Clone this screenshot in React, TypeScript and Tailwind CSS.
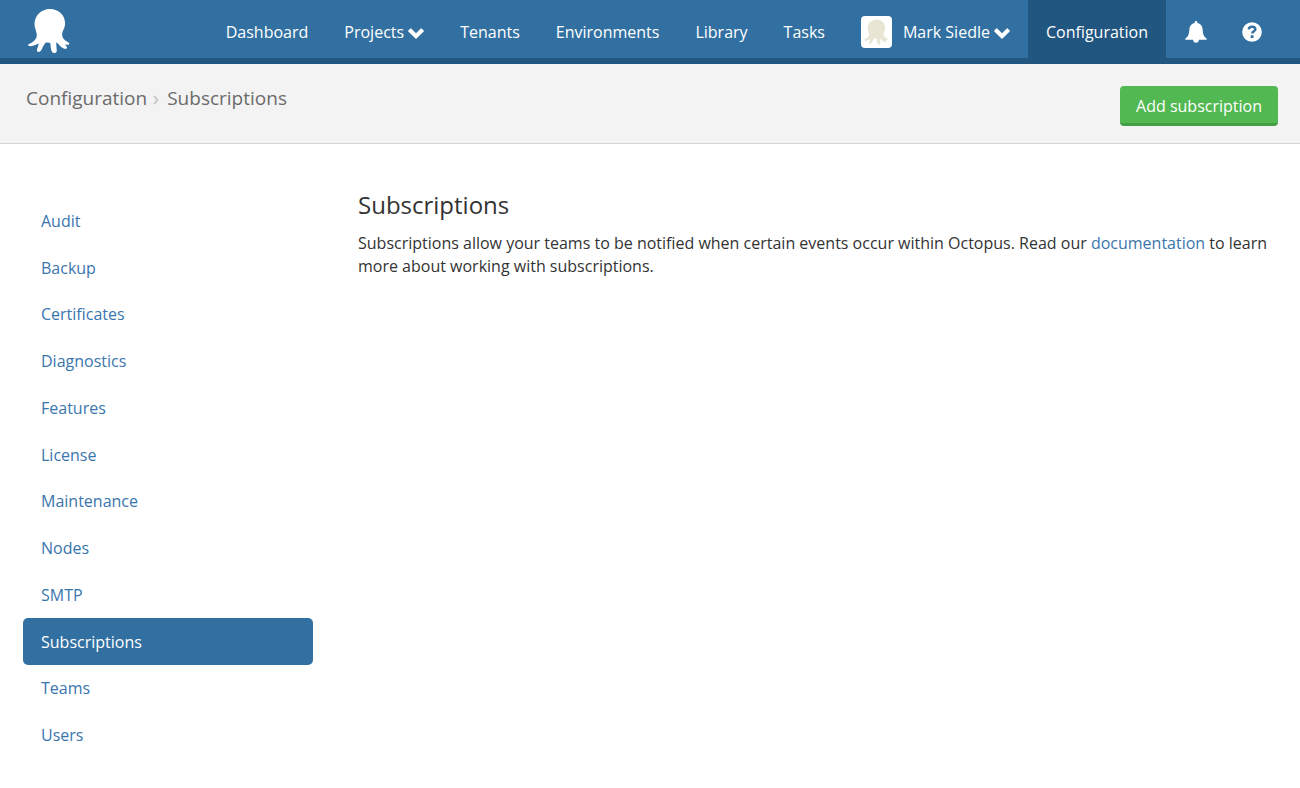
import React from 'react';

const navText = 'flex items-center px-[18px] pt-1.5 text-white';

const sections = [
  'Audit',
  'Backup',
  'Certificates',
  'Diagnostics',
  'Features',
  'License',
  'Maintenance',
  'Nodes',
  'SMTP',
  'Subscriptions',
  'Teams',
  'Users',
];

function Octopus({ className }: { className: string }) {
  return (
    <svg viewBox="0 0 42 44" className={className} fill="currentColor" aria-hidden="true">
      <path d="M22 0C13 0 6.500 6.700 6.500 15c0 4.200 2.300 7.500 2.300 11 0 3.600-2.300 6-5.300 7.700C1.500 34.800 0 35.300 0 36c0 1.200 2.800 1.500 5 .8 2-.6 3.600-1.200 5.500-2.300.2 1.600-.8 3.700-1.400 5.400-.5 1.600.2 3.100 1.600 3.100 1.900 0 2.800-2 3.800-4.200.8-1.800 2-4 3.500-5.200 1.700-.2 3 .1 4.300.3.400 2.500.4 8.700 2.900 9.900 1.700.8 3.500-.2 3.600-2 .1-2.500-.8-5.200-.5-8.200 1.500.5 2.500 2.300 4 3.600 1.700 1.500 4.200 3 6 2.600 1.100-.4.800-1.500.2-2.300l-1.700-2c1.700.5 4.100.6 4.500-.5.300-1-1-1.600-2-2.200-3-1.800-5.200-3.700-5.200-7.300 0-3.600 3-6.200 3-10.700C37.200 6.500 31 0 22 0Z" />
    </svg>
  );
}

function Chevron() {
  return (
    <svg viewBox="0 0 16 11" className="ml-1 mt-0.5 h-[11px] w-4" fill="currentColor" aria-hidden="true">
      <path d="M8 10.900.3 3.400a.6.6 0 0 1 0-.8L2.400.5a.6.6 0 0 1 .8 0L8 5.200 12.800.5a.6.6 0 0 1 .8 0l2.100 2.100a.6.6 0 0 1 0 .8Z" />
    </svg>
  );
}

function Bell() {
  return (
    <svg viewBox="0 0 22 22" className="h-[22px] w-[22px]" fill="currentColor" aria-hidden="true">
      <path d="M11 0c.9 0 1.400.6 1.400 1.500v.4c3.400.6 5 3.200 5.200 6.200.2 4.500.8 7.300 4 9.500.5.400.2 1.200-.4 1.200H14c-.2 1.700-1.400 3-3 3s-2.800-1.300-3-3H.8c-.6 0-.9-.8-.4-1.200 3.200-2.200 3.800-5 4-9.500.2-3 1.800-5.600 5.200-6.200v-.4C9.600.6 10.100 0 11 0Z" />
    </svg>
  );
}

function Help() {
  return (
    <svg viewBox="0 0 20 20" className="h-5 w-5" aria-hidden="true">
      <circle cx="10" cy="10" r="9.800" fill="#fff" />
      <path d="M6.800 7.300C7 5.400 8.300 4.700 10.100 4.700c1.900 0 3.200.9 3.200 2.500 0 1.900-2.900 2.100-3.100 4.300" fill="none" stroke="#3270a1" strokeWidth="2.500" />
      <path d="M8.700 13.200h2.800v2.800H8.700z" fill="#3270a1" />
    </svg>
  );
}

export default function App() {
  return (
    <div className="min-h-screen bg-white font-['Open_Sans','Noto_Sans',sans-serif] text-base text-[#333]">
      <header className="flex h-16 items-stretch justify-between border-b-[6px] border-[#215680] bg-[#3270a1] pl-7 pr-[22px]">
        <a href="#home" aria-label="Home" className="pt-[9px] text-white">
          <Octopus className="h-11 w-[42px]" />
        </a>
        <nav aria-label="Main" className="flex">
          <a href="#dashboard" className={navText}>Dashboard</a>
          <button type="button" className={navText}>Projects<Chevron /></button>
          <a href="#tenants" className={navText}>Tenants</a>
          <a href="#environments" className={navText}>Environments</a>
          <a href="#library" className={navText}>Library</a>
          <a href="#tasks" className={navText}>Tasks</a>
          <button type="button" className={navText}>
            <span className="mr-[11px] flex h-8 w-[31px] items-center justify-center rounded-sm bg-white text-[#e9e5d4]">
              <Octopus className="h-[26px] w-6" />
            </span>
            Mark Siedle<Chevron />
          </button>
          <a href="#configuration" aria-current="page" className="flex items-center bg-[#215680] px-[18px] pt-1.5 text-white">Configuration</a>
          <button type="button" aria-label="Notifications" className="flex w-14 items-center justify-center pl-1 pt-1.5 text-white"><Bell /></button>
          <button type="button" aria-label="Help" className="flex w-14 items-center justify-center pl-1 pt-1.5 text-white"><Help /></button>
        </nav>
      </header>

      <div className="flex items-start justify-between border-b border-[#d5d5d5] bg-[#f3f3f3] pb-[17px] pl-[26px] pr-[22px] pt-[22px]">
        <nav aria-label="Breadcrumb" className="flex items-center text-[19px] leading-6 text-[#6b6b6b]">
          <a href="#configuration">Configuration</a>
          <svg viewBox="0 0 6 10" className="ml-1.5 mr-2 mt-1 h-2.5 w-1.5" fill="none" stroke="#ccc" strokeWidth="2" aria-hidden="true">
            <path d="m1 1 3.500 4L1 9" />
          </svg>
          <span>Subscriptions</span>
        </nav>
        <button type="button" className="h-10 rounded-sm border-b-[3px] border-[#43a047] bg-[#52b852] px-4 pt-0.5 text-white">
          Add subscription
        </button>
      </div>

      <div className="flex items-start pb-7 pl-[23px] pr-[22px]">
        <nav aria-label="Configuration sections" className="w-[290px] shrink-0 pt-[53px]">
          <ul className="grid min-h-[561px] auto-rows-fr">
            {sections.map((name) => (
              <li key={name} className="flex">
                <a
                  href={'#' + name.toLowerCase()}
                  aria-current={name === 'Subscriptions' ? 'page' : undefined}
                  className={
                    name === 'Subscriptions'
                      ? 'flex flex-1 items-center rounded-[5px] bg-[#3270a1] px-[18px] pt-px text-white'
                      : 'flex flex-1 items-center rounded-[5px] px-[18px] pt-px text-[#3a76ad]'
                  }
                >
                  {name}
                </a>
              </li>
            ))}
          </ul>
        </nav>
        <main className="ml-[45px] min-w-0 flex-1 pt-[45px]">
          <h1 className="text-2xl leading-8">Subscriptions</h1>
          <p className="mt-[11px] leading-[23px]">
            Subscriptions allow your teams to be notified when certain events occur within Octopus. Read our{' '}
            <a href="#documentation" className="text-[#3a76ad]">documentation</a> to learn more about working with subscriptions.
          </p>
        </main>
      </div>
    </div>
  );
}
